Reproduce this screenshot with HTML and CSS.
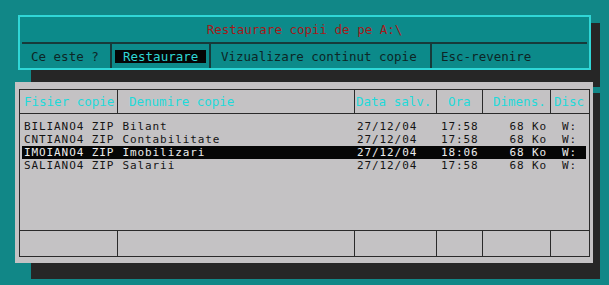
FILE: index.html
```html
<!DOCTYPE html>
<html lang="ro">
<head>
<meta charset="UTF-8">
<title>Restaurare copii</title>
<link rel="stylesheet" href="styles.css">
</head>
<body>

<div class="screen">
    <!-- Menu window -->
    <div class="menu-win">
        <div class="title">Restaurare copii de pe A:\</div>
        <div class="menu">
            <div class="item item-help">Ce este ?</div>
            <div class="item item-restore"><span class="selected">Restaurare</span></div>
            <div class="item item-view">Vizualizare continut copie</div>
            <div class="item item-esc">Esc-revenire</div>
        </div>
    </div>

    <!-- Backup list window -->
    <div class="list-win">
        <div class="table">
            <div class="head">
                <div class="c1">Fisier copie</div>
                <div class="c2">Denumire copie</div>
                <div class="c3">Data salv.</div>
                <div class="c4">Ora</div>
                <div class="c5">Dimens.</div>
                <div class="c6">Disc</div>
            </div>
            <div class="rows">
                <div class="row"><span class="file">BILIANO4 ZIP</span><span class="name">Bilant</span><span class="date">27/12/04</span><span class="time">17:58</span><span class="size">68 Ko</span><span class="disk">W:</span></div>
                <div class="row"><span class="file">CNTIANO4 ZIP</span><span class="name">Contabilitate</span><span class="date">27/12/04</span><span class="time">17:58</span><span class="size">68 Ko</span><span class="disk">W:</span></div>
                <div class="row current"><span class="file">IMOIANO4 ZIP</span><span class="name">Imobilizari</span><span class="date">27/12/04</span><span class="time">18:06</span><span class="size">68 Ko</span><span class="disk">W:</span></div>
                <div class="row"><span class="file">SALIANO4 ZIP</span><span class="name">Salarii</span><span class="date">27/12/04</span><span class="time">17:58</span><span class="size">68 Ko</span><span class="disk">W:</span></div>
            </div>
            <div class="foot">
                <div class="c1"></div>
                <div class="c2"></div>
                <div class="c3"></div>
                <div class="c4"></div>
                <div class="c5"></div>
                <div class="c6"></div>
            </div>
        </div>
    </div>
</div>

</body>
</html>
```

FILE: styles.css
```css
:root {
    --teal: #118787;
    --teal-in: #0c8a8a;
    --cyan: #30d6d6;
    --grey: #c4c2c4;
    --shadow: #262626;
    --line: #2a2a2a;
    --ink: #141414;
}

* {
    margin: 0; padding: 0;
    box-sizing: border-box;
}

body {
    background: var(--teal);
    font-family: 'DejaVu Sans Mono', 'Liberation Mono', monospace;
    font-size: 12.5px;
    line-height: 13px;
    color: var(--ink);
    width: 609px;
    height: 285px;
    overflow: hidden;
}

.screen {
    padding-top: 15px;
}

/* ---- top menu window ---- */
.menu-win {
    position: relative;
    margin-left: 18px;
    width: 573px;
    height: 55px;
    background: var(--teal-in);
    border: 2px solid var(--cyan);
}

.menu-win::after {
    content: "";
    position: absolute;
    left: 11px; top: 6px;
    right: -11px; bottom: -19px;
    background: var(--shadow);
    z-index: -1;
}

.title {
    height: 25px;
    padding-top: 6px;
    text-align: center;
    color: #a41a1a;
}

.menu {
    display: flex;
    height: 26px;
    margin: 0 2px;
    border-top: 2px solid #173a3a;
    color: #0d2626;
}

.item {
    display: flex;
    align-items: center;
    border-right: 2px solid #173a3a;
}

.item-help { width: 90px; padding-left: 9px; }
.item-restore { width: 99px; padding-left: 3px; }
.item-view { width: 221px; padding-left: 10px; }
.item-esc { flex: 1; padding-left: 9px; border-right: none; }

.selected {
    background: #050505;
    color: var(--cyan);
    padding: 0 8px;
    line-height: 13px;
}

/* ---- backup list window ---- */
.list-win {
    position: relative;
    margin: 12px 0 0 15px;
    width: 578px;
    height: 181px;
    background: var(--grey);
    padding: 7px 3px 6px 4px;
}

.list-win::after {
    content: "";
    position: absolute;
    left: 16px; top: 11px;
    right: -7px; bottom: -16px;
    background: var(--shadow);
    z-index: -1;
}

.table {
    height: 100%;
    border: 1px solid var(--line);
    display: flex;
    flex-direction: column;
}

.head, .foot {
    display: grid;
    grid-template-columns: 98px 237px 82px 46px 68px 1fr;
}

.head {
    height: 24px;
    border-bottom: 1px solid var(--line);
    color: #1edada;
}

.head > div, .foot > div {
    height: 100%;
    display: flex;
    align-items: center;
    border-right: 1px solid var(--line);
}

.head > div:last-child, .foot > div:last-child { border-right: none; }

.head .c1 { padding-left: 4px; }
.head .c2 { padding-left: 11px; }
.head .c3 { padding-left: 1px; }
.head .c4 { padding-left: 11px; }
.head .c5 { padding-left: 10px; }
.head .c6 { padding-left: 3px; }

.rows {
    flex: 1;
    padding: 6px 3px 0 2px;
}

.row {
    display: flex;
    align-items: center;
    height: 13px;
    padding-left: 2px;
    font-size: 11px;
    line-height: 13px;
    letter-spacing: 0.9px;
    white-space: nowrap;
}

.row.current {
    background: #060606;
    color: #ececec;
}

.file { width: 98.5px; }
.name { width: 234.5px; }
.date { width: 84px; }
.time { width: 52px; }
.size { width: 54px; text-align: right; }
.disk { padding-left: 15px; }

.foot {
    height: 26px;
    border-top: 1px solid var(--line);
}
```
